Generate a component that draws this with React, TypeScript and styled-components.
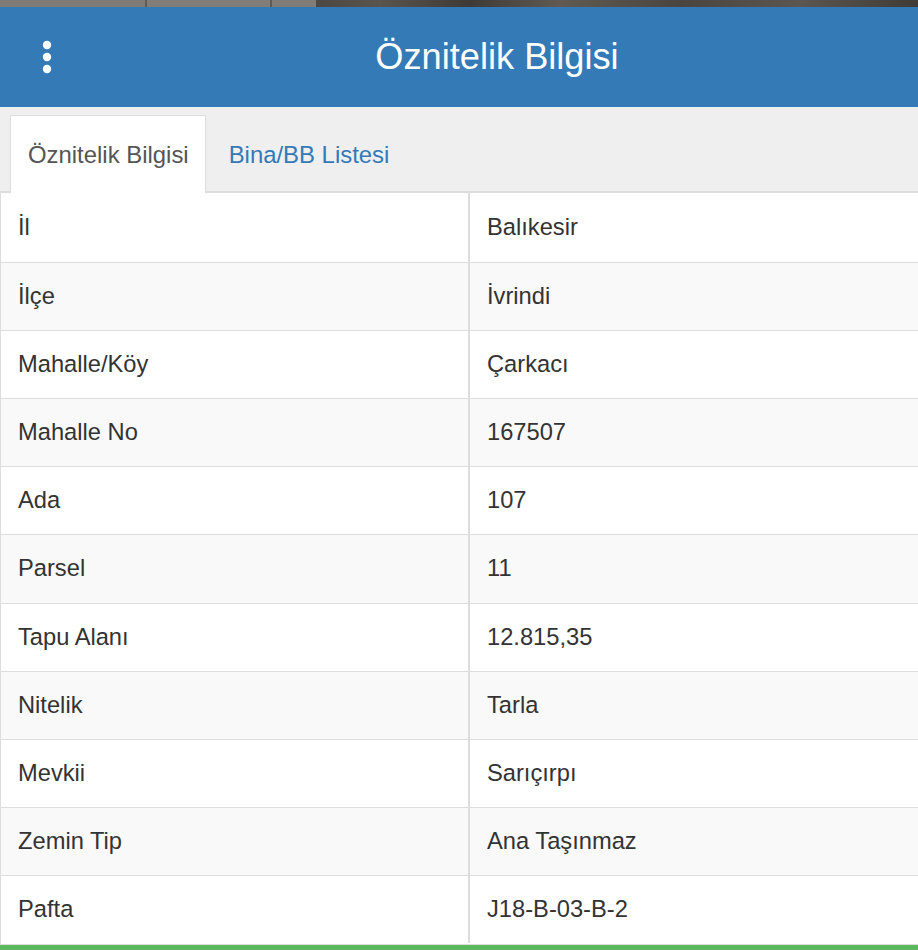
import styled, { createGlobalStyle } from "styled-components";

const GlobalStyle = createGlobalStyle`
    html, body {
        margin: 0;
        padding: 0;
        background: #ffffff;
    }
    body {
        font-family: "Liberation Sans", Arial, Helvetica, sans-serif;
        color: #333333;
        overflow: hidden;
    }
`;

const Page = styled.div`
    width: 918px;
    height: 950px;
    display: flex;
    flex-direction: column;
    overflow: hidden;
`;

// strip of the map/photo visible above the panel
const PhotoStrip = styled.div`
    height: 7px;
    flex-shrink: 0;
    background:
        linear-gradient(to right,
            #7f7c78 0, #7f7c78 145px, #5f5c58 145px, #5f5c58 147px,
            #817e7a 147px, #817e7a 270px, #5e5b57 270px, #5e5b57 272px,
            #807d79 272px, #807d79 316px, #4c4741 316px,
            #5a544d 380px, #3e3a35 470px, #605a52 560px,
            #4a453f 680px, #5b564f 800px, #3f3b36 918px);
`;

const Header = styled.header`
    height: 100px;
    flex-shrink: 0;
    background-color: #337ab7;
    display: flex;
    align-items: center;
    justify-content: center;
    padding-left: 76px;
    position: relative;
`;

const MenuButton = styled.button`
    position: absolute;
    left: 32px;
    top: 30px;
    width: 30px;
    height: 40px;
    border: 0;
    padding: 0;
    background: transparent;
    display: flex;
    align-items: center;
    justify-content: center;
    cursor: pointer;
`;

const Title = styled.h1`
    margin: 0;
    color: #ffffff;
    font-size: 36.2px;
    font-weight: 400;
`;

const TabBar = styled.nav`
    flex-shrink: 0;
    background-color: #efefef;
    padding: 8px 10px 0;
    display: flex;
    border-bottom: 2px solid #dddddd;
`;

const Tab = styled.button<{ active?: boolean }>`
    height: 78px;
    margin-bottom: -2px;
    padding: 0 16px 0 17px;
    border: 1px solid ${(props) => (props.active ? "#dddddd" : "transparent")};
    border-bottom: 0;
    background-color: ${(props) => (props.active ? "#ffffff" : "transparent")};
    color: ${(props) => (props.active ? "#555555" : "#337ab7")};
    font-family: "Liberation Sans", Arial, sans-serif;
    font-size: 23.9px;
    cursor: pointer;
    ${(props) => (props.active ? "" : "margin-left: 5px;")}
`;

const Table = styled.div`
    flex: 1;
    display: grid;
    grid-template-columns: 469px 1fr;
    grid-template-rows: 68.6px;
    grid-auto-rows: 68.2px;
    border-left: 1px solid #dddddd;
    border-bottom: 1px solid #dddddd;
`;

const Cell = styled.div<{ striped?: boolean; first?: boolean }>`
    display: flex;
    align-items: center;
    padding-left: 17px;
    border-top: 1px solid #dddddd;
    border-right: ${(props) => (props.first ? "2px solid #dddddd" : "0")};
    background-color: ${(props) => (props.striped ? "#f9f9f9" : "#ffffff")};
    color: #333333;
    font-size: 23.7px;
    &:nth-child(1), &:nth-child(2) {
        border-top: 0;
    }
`;

const FooterBar = styled.div`
    height: 5px;
    flex-shrink: 0;
    background-color: #5cb85c;
`;

const rows: [string, string][] = [
    ["İl", "Balıkesir"],
    ["İlçe", "İvrindi"],
    ["Mahalle/Köy", "Çarkacı"],
    ["Mahalle No", "167507"],
    ["Ada", "107"],
    ["Parsel", "11"],
    ["Tapu Alanı", "12.815,35"],
    ["Nitelik", "Tarla"],
    ["Mevkii", "Sarıçırpı"],
    ["Zemin Tip", "Ana Taşınmaz"],
    ["Pafta", "J18-B-03-B-2"],
];

function KebabIcon() {
    return (
        <svg width="12" height="36" viewBox="0 0 12 36">
            <circle cx="6" cy="6" r="4.2" fill="#ffffff" />
            <circle cx="6" cy="18" r="4.2" fill="#ffffff" />
            <circle cx="6" cy="30" r="4.2" fill="#ffffff" />
        </svg>
    );
}

function App() {
    return (
        <>
            <GlobalStyle />
            <Page>
                <PhotoStrip />
                <Header>
                    <MenuButton aria-label="menu">
                        <KebabIcon />
                    </MenuButton>
                    <Title>Öznitelik Bilgisi</Title>
                </Header>
                <TabBar>
                    <Tab active>Öznitelik Bilgisi</Tab>
                    <Tab>Bina/BB Listesi</Tab>
                </TabBar>
                <Table>
                    {rows.map(([label, value], i) => [
                        <Cell key={label} first striped={i % 2 === 1}>{label}</Cell>,
                        <Cell key={label + "-v"} striped={i % 2 === 1}>{value}</Cell>,
                    ])}
                </Table>
                <FooterBar />
            </Page>
        </>
    );
}

export default App;
